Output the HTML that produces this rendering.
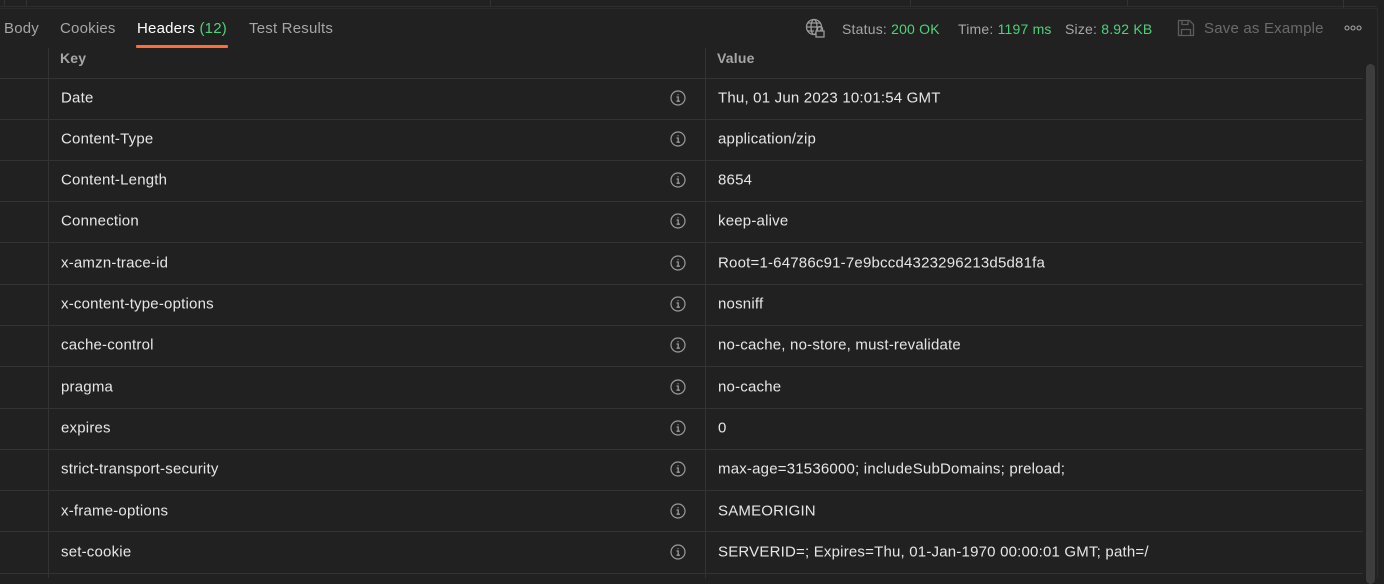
<!DOCTYPE html>
<html><head><meta charset="utf-8"><style>
*{margin:0;padding:0;box-sizing:border-box}
html,body{width:1384px;height:578px}
body{background:#212121;font-family:"Liberation Sans",sans-serif;color:#e6e6e6;position:relative;overflow:hidden;font-size:15px;letter-spacing:0.2px}
.a{position:absolute;white-space:nowrap}
.hl{position:absolute;height:1px;background:#333}
.vl{position:absolute;width:1px;background:#333}
.t{color:#a6a6a6}
.g{color:#4fd17a}
.row{position:absolute;left:0;width:1363px;height:41px}
.k{position:absolute;left:61px;top:50%;transform:translateY(-50%)}
.v{position:absolute;left:718px;top:50%;transform:translateY(-50%)}
.i{position:absolute;left:670px;top:50%;margin-top:-8px;width:16px;height:16px}
</style></head><body>
<div class="hl" style="left:0;top:6px;width:1377px;background:#2e2e2e"></div>
<div class="hl" style="left:0;top:8px;width:1377px;background:#2a2a2a"></div>
<div class="vl" style="left:4px;top:0;height:6px"></div>
<div class="vl" style="left:26px;top:0;height:6px"></div>
<div class="vl" style="left:490px;top:0;height:6px"></div>
<div class="vl" style="left:910px;top:0;height:6px"></div>
<div class="vl" style="left:1127px;top:0;height:6px"></div>
<div class="vl" style="left:1343px;top:0;height:8px"></div>

<div class="a t" style="left:4px;top:20px">Body</div>
<div class="a t" style="left:60px;top:20px">Cookies</div>
<div class="a" style="left:137px;top:20px;color:#fff">Headers <span class="g">(12)</span></div>
<div class="a" style="left:136px;top:45px;width:92px;height:3px;background:#ff6c37;border-radius:1px"></div>
<div class="a t" style="left:249px;top:20px">Test Results</div>

<svg class="a" style="left:805px;top:18px" width="22" height="22" viewBox="0 0 22 22" fill="none" stroke="#9a9a9a" stroke-width="1.3"><circle cx="9" cy="9" r="7.5"/><ellipse cx="9" cy="9" rx="3" ry="7.5"/><path d="M1.5 9h15M3 5h12M3 13h6"/><rect x="11" y="13" width="8" height="6" fill="#212121"/><path d="M12.5 13v-2a2.5 2.5 0 0 1 5 0v2"/></svg>
<div class="a t" style="left:842px;top:21px;font-size:14px">Status: <span class="g">200 OK</span></div>
<div class="a t" style="left:958px;top:21px;font-size:14px">Time: <span class="g">1197 ms</span></div>
<div class="a t" style="left:1065px;top:21px;font-size:14px">Size: <span class="g">8.92 KB</span></div>
<svg class="a" style="left:1177px;top:19px" width="18" height="18" viewBox="0 0 18 18" fill="none" stroke="#5c5c5c" stroke-width="1.3"><path d="M1.5 1.5h11l4 4v11h-15z"/><path d="M5 1.5v4h6v-4M4.5 16.5v-6h9v6"/></svg>
<div class="a" style="left:1204px;top:20px;color:#6b6b6b">Save as Example</div>
<svg class="a" style="left:1344px;top:25px" width="18" height="6" viewBox="0 0 18 6" fill="none" stroke="#a6a6a6" stroke-width="1.1"><circle cx="3" cy="3" r="2"/><circle cx="9" cy="3" r="2"/><circle cx="15" cy="3" r="2"/></svg>

<div class="vl" style="left:48px;top:48px;height:530px"></div>
<div class="vl" style="left:705px;top:48px;height:530px"></div>
<div class="a" style="left:60px;top:50px;color:#a6a6a6;font-weight:bold;font-size:14px">Key</div>
<div class="a" style="left:717px;top:50px;color:#a6a6a6;font-weight:bold;font-size:14px">Value</div>
<div class="hl" style="left:0;top:78px;width:1363px"></div>

<div class="row" style="top:77px"><span class="k">Date</span><svg class="i" viewBox="0 0 16 16"><circle cx="8" cy="8" r="7" fill="none" stroke="#9a9a9a" stroke-width="1.2"/><path d="M6.5 7h1.7v4.2M6.5 11.2h3.4M8 4.2v1" stroke="#9a9a9a" stroke-width="1.3" fill="none"/></svg><span class="v">Thu, 01 Jun 2023 10:01:54 GMT</span></div>
<div class="row" style="top:118.3px"><span class="k">Content-Type</span><svg class="i" viewBox="0 0 16 16"><circle cx="8" cy="8" r="7" fill="none" stroke="#9a9a9a" stroke-width="1.2"/><path d="M6.5 7h1.7v4.2M6.5 11.2h3.4M8 4.2v1" stroke="#9a9a9a" stroke-width="1.3" fill="none"/></svg><span class="v">application/zip</span></div>
<div class="row" style="top:159.6px"><span class="k">Content-Length</span><svg class="i" viewBox="0 0 16 16"><circle cx="8" cy="8" r="7" fill="none" stroke="#9a9a9a" stroke-width="1.2"/><path d="M6.5 7h1.7v4.2M6.5 11.2h3.4M8 4.2v1" stroke="#9a9a9a" stroke-width="1.3" fill="none"/></svg><span class="v">8654</span></div>
<div class="row" style="top:200.9px"><span class="k">Connection</span><svg class="i" viewBox="0 0 16 16"><circle cx="8" cy="8" r="7" fill="none" stroke="#9a9a9a" stroke-width="1.2"/><path d="M6.5 7h1.7v4.2M6.5 11.2h3.4M8 4.2v1" stroke="#9a9a9a" stroke-width="1.3" fill="none"/></svg><span class="v">keep-alive</span></div>
<div class="row" style="top:242.2px"><span class="k">x-amzn-trace-id</span><svg class="i" viewBox="0 0 16 16"><circle cx="8" cy="8" r="7" fill="none" stroke="#9a9a9a" stroke-width="1.2"/><path d="M6.5 7h1.7v4.2M6.5 11.2h3.4M8 4.2v1" stroke="#9a9a9a" stroke-width="1.3" fill="none"/></svg><span class="v">Root=1-64786c91-7e9bccd4323296213d5d81fa</span></div>
<div class="row" style="top:283.5px"><span class="k">x-content-type-options</span><svg class="i" viewBox="0 0 16 16"><circle cx="8" cy="8" r="7" fill="none" stroke="#9a9a9a" stroke-width="1.2"/><path d="M6.5 7h1.7v4.2M6.5 11.2h3.4M8 4.2v1" stroke="#9a9a9a" stroke-width="1.3" fill="none"/></svg><span class="v">nosniff</span></div>
<div class="row" style="top:324.8px"><span class="k">cache-control</span><svg class="i" viewBox="0 0 16 16"><circle cx="8" cy="8" r="7" fill="none" stroke="#9a9a9a" stroke-width="1.2"/><path d="M6.5 7h1.7v4.2M6.5 11.2h3.4M8 4.2v1" stroke="#9a9a9a" stroke-width="1.3" fill="none"/></svg><span class="v">no-cache, no-store, must-revalidate</span></div>
<div class="row" style="top:366.1px"><span class="k">pragma</span><svg class="i" viewBox="0 0 16 16"><circle cx="8" cy="8" r="7" fill="none" stroke="#9a9a9a" stroke-width="1.2"/><path d="M6.5 7h1.7v4.2M6.5 11.2h3.4M8 4.2v1" stroke="#9a9a9a" stroke-width="1.3" fill="none"/></svg><span class="v">no-cache</span></div>
<div class="row" style="top:407.4px"><span class="k">expires</span><svg class="i" viewBox="0 0 16 16"><circle cx="8" cy="8" r="7" fill="none" stroke="#9a9a9a" stroke-width="1.2"/><path d="M6.5 7h1.7v4.2M6.5 11.2h3.4M8 4.2v1" stroke="#9a9a9a" stroke-width="1.3" fill="none"/></svg><span class="v">0</span></div>
<div class="row" style="top:448.7px"><span class="k">strict-transport-security</span><svg class="i" viewBox="0 0 16 16"><circle cx="8" cy="8" r="7" fill="none" stroke="#9a9a9a" stroke-width="1.2"/><path d="M6.5 7h1.7v4.2M6.5 11.2h3.4M8 4.2v1" stroke="#9a9a9a" stroke-width="1.3" fill="none"/></svg><span class="v">max-age=31536000; includeSubDomains; preload;</span></div>
<div class="row" style="top:490px"><span class="k">x-frame-options</span><svg class="i" viewBox="0 0 16 16"><circle cx="8" cy="8" r="7" fill="none" stroke="#9a9a9a" stroke-width="1.2"/><path d="M6.5 7h1.7v4.2M6.5 11.2h3.4M8 4.2v1" stroke="#9a9a9a" stroke-width="1.3" fill="none"/></svg><span class="v">SAMEORIGIN</span></div>
<div class="row" style="top:531.3px"><span class="k">set-cookie</span><svg class="i" viewBox="0 0 16 16"><circle cx="8" cy="8" r="7" fill="none" stroke="#9a9a9a" stroke-width="1.2"/><path d="M6.5 7h1.7v4.2M6.5 11.2h3.4M8 4.2v1" stroke="#9a9a9a" stroke-width="1.3" fill="none"/></svg><span class="v">SERVERID=; Expires=Thu, 01-Jan-1970 00:00:01 GMT; path=/</span></div>

<div class="hl" style="left:0;top:119px;width:1363px"></div>
<div class="hl" style="left:0;top:160px;width:1363px"></div>
<div class="hl" style="left:0;top:201px;width:1363px"></div>
<div class="hl" style="left:0;top:242px;width:1363px"></div>
<div class="hl" style="left:0;top:284px;width:1363px"></div>
<div class="hl" style="left:0;top:325px;width:1363px"></div>
<div class="hl" style="left:0;top:366px;width:1363px"></div>
<div class="hl" style="left:0;top:408px;width:1363px"></div>
<div class="hl" style="left:0;top:449px;width:1363px"></div>
<div class="hl" style="left:0;top:490px;width:1363px"></div>
<div class="hl" style="left:0;top:531px;width:1363px"></div>
<div class="hl" style="left:0;top:573px;width:1363px"></div>

<div class="a" style="left:1366px;top:64px;width:9px;height:520px;background:#3d3d3d;border-radius:5px"></div>
<div class="vl" style="left:1377px;top:8px;height:570px;background:#2c2c2c"></div>
</body></html>
